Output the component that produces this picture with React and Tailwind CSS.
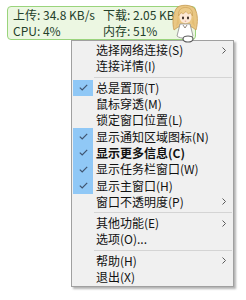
import React from "react";

const menuItems = [
  { label: "选择网络连接(S)", sub: true },
  { label: "连接详情(I)" },
  { sep: true },
  { label: "总是置顶(T)", checked: true },
  { label: "鼠标穿透(M)" },
  { label: "锁定窗口位置(L)" },
  { label: "显示通知区域图标(N)", checked: true },
  { label: "显示更多信息(C)", checked: true, bold: true },
  { label: "显示任务栏窗口(W)", checked: true },
  { label: "显示主窗口(H)", checked: true },
  { label: "窗口不透明度(P)", sub: true },
  { sep: true },
  { label: "其他功能(E)", sub: true },
  { label: "选项(O)..." },
  { sep: true },
  { label: "帮助(H)", sub: true },
  { label: "退出(X)" },
];

const Girl = () => (
  <svg width="30" height="40" viewBox="0 0 30 40" className="absolute left-[162px] top-[-4px]">
    {/* hair back */}
    <path d="M6 6 C8 1 22 1 25 6 C28 11 28 20 26 27 L22 24 L8 24 L4 27 C2 20 3 11 6 6 Z" fill="#e9c784" stroke="#c79a52" strokeWidth="0.8" />
    {/* body */}
    <path d="M10 21 L20 21 L23 33 C20 36 10 36 7 33 Z" fill="#ffffff" stroke="#8a8a8a" strokeWidth="0.8" />
    <path d="M13 22 L15 25 L17 22" fill="none" stroke="#6b5a4a" strokeWidth="0.7" />
    {/* face */}
    <ellipse cx="15.5" cy="14" rx="6" ry="6.2" fill="#fde8d6" />
    {/* bangs */}
    <path d="M8.5 13 C8 6 12 4.5 15.5 4.5 C20 4.5 23 7 22.5 13 L20.5 9.5 L18.5 11 L16 8.5 L13 11 L11 9.5 Z" fill="#eccb8a" stroke="#c79a52" strokeWidth="0.6" />
    <path d="M8 12 L6 24 L9 20 Z M23 12 L25 24 L22 20 Z" fill="#e4bd74" />
    {/* eyes */}
    <ellipse cx="13" cy="15" rx="1" ry="1.4" fill="#3a2a22" />
    <ellipse cx="18" cy="15" rx="1" ry="1.4" fill="#3a2a22" />
    <path d="M14.8 18.2 L16.2 18.2" stroke="#c86a5a" strokeWidth="0.6" />
    {/* base */}
    <ellipse cx="18" cy="36" rx="5" ry="3" fill="#ffffff" stroke="#5a5a5a" strokeWidth="1.2" />
  </svg>
);

const Check = () => (
  <svg width="9" height="7" viewBox="0 0 9 7">
    <path d="M0.8 3.6 L3.2 6 L8.2 0.8" fill="none" stroke="#3f5470" strokeWidth="1.2" />
  </svg>
);

const Chevron = () => (
  <svg width="4" height="7" viewBox="0 0 4 7">
    <path d="M0.5 0.5 L3.5 3.5 L0.5 6.5" fill="none" stroke="#5a5a5a" strokeWidth="1" />
  </svg>
);

export default function App() {
  return (
    <div className="h-[300px] w-[246px] bg-white font-['Noto_Sans_CJK_SC','Microsoft_YaHei',sans-serif] text-[12px] leading-none">
      <div className="relative ml-[7px] mt-[6px] h-[34px] w-[189px] rounded-[4px] border border-[#9ad47c] bg-[#ecf7e2] pl-[5px] text-[#23402a]">
        <div className="grid grid-cols-[90px_1fr]">
          <div className="flex h-[16px] items-center">上传: 34.8 KB/s</div>
          <div className="flex h-[16px] items-center">下载: 2.05 KB/s</div>
          <div className="flex h-[16px] items-center">CPU: 4%</div>
          <div className="flex h-[16px] items-center">内存: 51%</div>
        </div>
        <Girl />
      </div>

      <div className="ml-[71px] w-[163px] border border-[#a0a0a0] bg-[#f0f0f0] py-[1px] text-[#111111] shadow-[2px_2px_2px_rgba(0,0,0,0.3)]">
        {menuItems.map((item, i) =>
          item.sep ? (
            <div key={i} className="flex h-[5px] items-center">
              <div className="ml-[22px] mr-[1px] h-px flex-1 bg-[#d4d4d4]" />
            </div>
          ) : (
            <div key={i} className="flex h-[16.3px] items-center">
              <div
                className={
                  item.checked
                    ? "ml-[1px] flex h-full w-[20px] items-center justify-center bg-[#90c8f6]"
                    : "ml-[1px] h-full w-[20px]"
                }
              >
                {item.checked ? <Check /> : null}
              </div>
              <span className={item.bold ? "flex-1 pl-[3px] font-bold" : "flex-1 pl-[3px]"}>{item.label}</span>
              {item.sub ? (
                <span className="mr-[7px] flex items-center">
                  <Chevron />
                </span>
              ) : null}
            </div>
          )
        )}
      </div>
    </div>
  );
}
